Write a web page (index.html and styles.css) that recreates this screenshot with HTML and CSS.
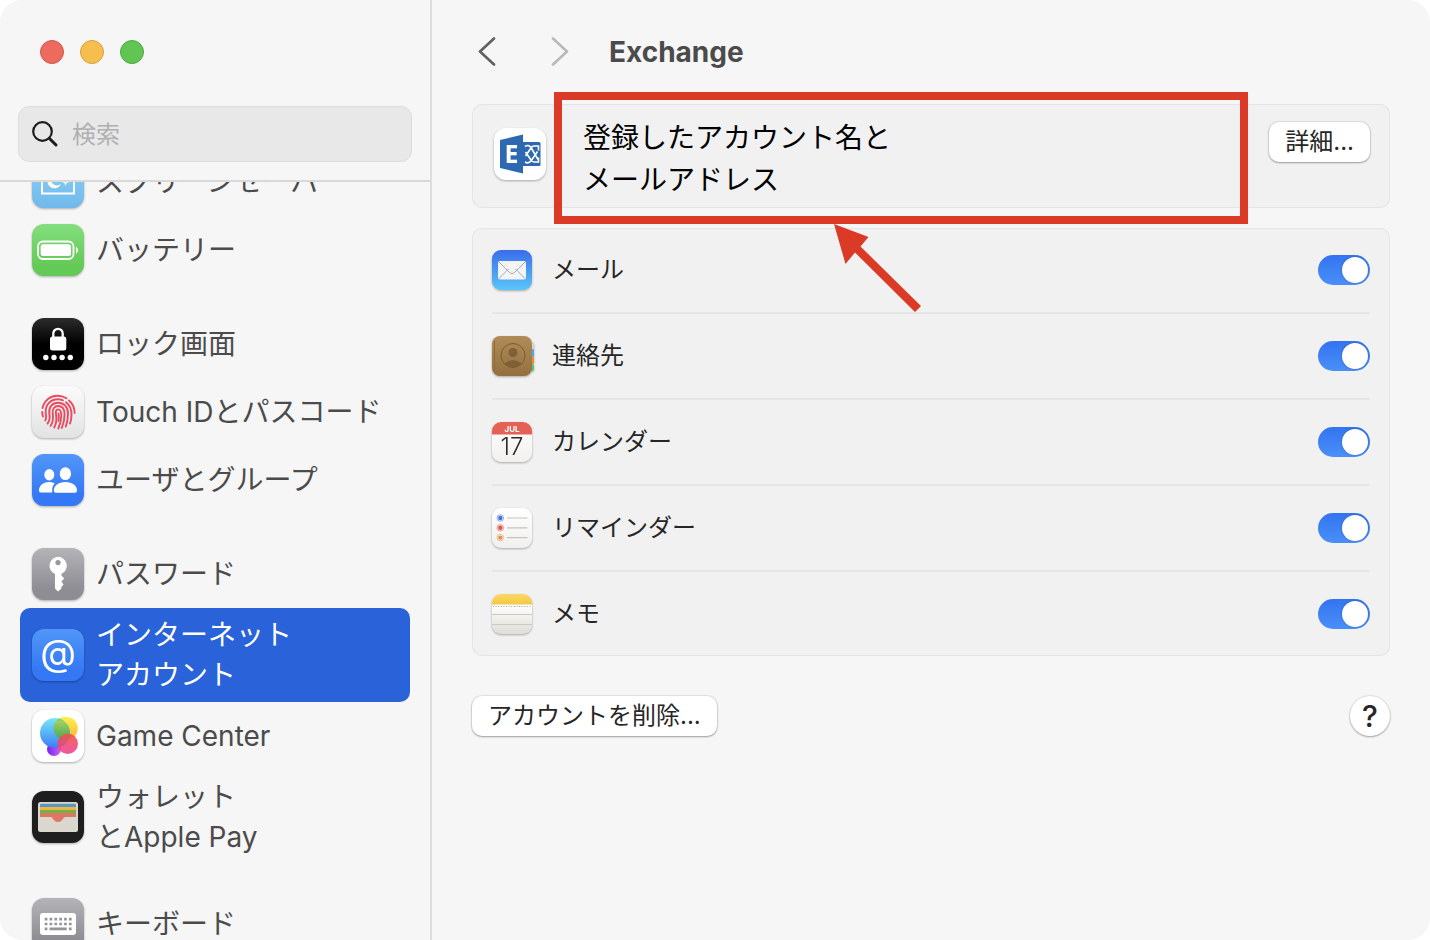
FILE: index.html
```html
<!DOCTYPE html>
<html lang="ja">
  <head>
    <meta charset="UTF-8" />
    <title>Exchange</title>
    <link rel="stylesheet" href="styles.css">
  </head>
  <body>
    <!-- shared gradients for the icons -->
    <svg class="defs" width="0" height="0" aria-hidden="true">
      <defs>
        <linearGradient id="gBlue" x1="0" y1="0" x2="0" y2="1"><stop offset="0" stop-color="#5196f8" /><stop offset="0.8" stop-color="#3478f6" /></linearGradient>
        <linearGradient id="gSky" x1="0" y1="0" x2="0" y2="1"><stop offset="0" stop-color="#8fd6f8" /><stop offset="1" stop-color="#6fb8ea" /></linearGradient>
        <linearGradient id="gGreen" x1="0" y1="0" x2="0" y2="1"><stop offset="0" stop-color="#83de7d" /><stop offset="0.8" stop-color="#64ca57" /></linearGradient>
        <linearGradient id="gBlack" x1="0" y1="0" x2="0" y2="1"><stop offset="0" stop-color="#2c2c2c" /><stop offset="0.5" stop-color="#000" /></linearGradient>
        <linearGradient id="gLight" x1="0" y1="0" x2="0" y2="1"><stop offset="0" stop-color="#fbfbfb" /><stop offset="1" stop-color="#e2e2e2" /></linearGradient>
        <linearGradient id="gGray" x1="0" y1="0" x2="0" y2="1"><stop offset="0" stop-color="#b4b3b8" /><stop offset="0.8" stop-color="#8e8d93" /></linearGradient>
        <linearGradient id="gMail" x1="0" y1="0" x2="0" y2="1"><stop offset="0" stop-color="#3a6de8" /><stop offset="1" stop-color="#5bc5fa" /></linearGradient>
        <linearGradient id="gPaper" x1="0" y1="0" x2="0" y2="1"><stop offset="0" stop-color="#fff" /><stop offset="1" stop-color="#f1f0ee" /></linearGradient>
        <linearGradient id="gNote" x1="0" y1="0" x2="0" y2="1"><stop offset="0.3" stop-color="#fdfdfc" /><stop offset="1" stop-color="#dfddd5" /></linearGradient>
        <linearGradient id="gYellow" x1="0" y1="0" x2="0" y2="1"><stop offset="0" stop-color="#f8d868" /><stop offset="1" stop-color="#f5c842" /></linearGradient>
        <linearGradient id="gBook" x1="0" y1="0" x2="0" y2="1"><stop offset="0" stop-color="#b08c58" /><stop offset="1" stop-color="#94703f" /></linearGradient>
        <linearGradient id="gBubble1" x1="0" y1="0" x2="0" y2="1"><stop offset="0" stop-color="#76e7f8" /><stop offset="1" stop-color="#3d7ef3" /></linearGradient>
        <linearGradient id="gBubble2" x1="0" y1="0" x2="0" y2="1"><stop offset="0" stop-color="#fdf14a" /><stop offset="1" stop-color="#f7b33c" /></linearGradient>
        <linearGradient id="gBubble3" x1="0" y1="0" x2="0" y2="1"><stop offset="0" stop-color="#52c4a0" /><stop offset="0.2" stop-color="#a3cf5e" /><stop offset="1" stop-color="#3fa75c" /></linearGradient>
        <linearGradient id="gBubble4" x1="0" y1="0" x2="0" y2="1"><stop offset="0" stop-color="#ef5145" /><stop offset="1" stop-color="#ee3f97" /></linearGradient>
        <linearGradient id="gBubble5" x1="0" y1="0" x2="1" y2="0"><stop offset="0" stop-color="#7a22f2" /><stop offset="1" stop-color="#c765ee" /></linearGradient>
        <clipPath id="cBubble"><circle cx="23" cy="23" r="15" /></clipPath>
        <clipPath id="cSmall"><rect width="40" height="40" rx="9" /></clipPath>
      </defs>
    </svg>

    <div class="window">
      <aside class="sidebar">
        <div class="sidebar-top">
          <div class="lights">
            <button class="light red" aria-label="閉じる"></button>
            <button class="light yellow" aria-label="しまう"></button>
            <button class="light green" aria-label="拡大"></button>
          </div>
          <label class="search">
            <svg width="28" height="28" viewBox="0 0 28 28" fill="none" stroke="#1d1d1d" stroke-linecap="round" aria-hidden="true">
              <circle cx="11.500" cy="11.500" r="9.300" stroke-width="2.200" />
              <path d="M18.500 18.500L25 25" stroke-width="3" />
            </svg>
            <input type="search" placeholder="検索" aria-label="検索" />
          </label>
        </div>

        <nav class="nav">
          <ul class="group">
            <li>
              <a class="item" href="#">
                <svg class="icon" viewBox="0 0 52 52" aria-hidden="true">
                  <rect width="52" height="52" rx="12" fill="url(#gSky)" />
                  <rect x="10" y="12" width="32" height="25.500" fill="none" stroke="#fff" stroke-width="2" />
                  <path d="M21 18.500a7 7 0 1 0 8 9.500a6.200 6.200 0 0 1-8-9.500z" fill="#fff" />
                  <path d="M33.500 22l1 3l3 1l-3 1l-1 3l-1-3l-3-1l3-1z" fill="#fff" />
                </svg>
                <span>スクリーンセーバ</span>
              </a>
            </li>
            <li>
              <a class="item" href="#">
                <svg class="icon" viewBox="0 0 52 52" aria-hidden="true">
                  <rect width="52" height="52" rx="12" fill="url(#gGreen)" />
                  <rect x="6" y="17.500" width="35.500" height="17.500" rx="5" fill="none" stroke="#fff" stroke-width="1.800" />
                  <rect x="8.700" y="20.300" width="30.300" height="11.800" rx="2.500" fill="#fff" />
                  <path d="M44 22.800a4 4 0 0 1 0 7z" fill="#fff" />
                </svg>
                <span>バッテリー</span>
              </a>
            </li>
          </ul>

          <ul class="group">
            <li>
              <a class="item" href="#">
                <svg class="icon" viewBox="0 0 52 52" aria-hidden="true">
                  <rect width="52" height="52" rx="12" fill="url(#gBlack)" />
                  <path d="M21.300 20v-4.500a4.700 4.700 0 0 1 9.400 0V20" fill="none" stroke="#fff" stroke-width="2.300" />
                  <rect x="18" y="18.500" width="16.300" height="14" rx="2.500" fill="#fff" />
                  <g fill="#fff">
                    <circle cx="13.800" cy="39.500" r="2.700" />
                    <circle cx="22" cy="39.500" r="2.700" />
                    <circle cx="30.100" cy="39.500" r="2.700" />
                    <circle cx="38.300" cy="39.500" r="2.700" />
                  </g>
                </svg>
                <span>ロック画面</span>
              </a>
            </li>
            <li>
              <a class="item" href="#">
                <svg class="icon" viewBox="0 0 52 52" aria-hidden="true">
                  <rect width="52" height="52" rx="12" fill="url(#gLight)" />
                  <g fill="none" stroke="#e94b60" stroke-width="1.900" stroke-linecap="round">
                    <path d="M10.500 22C12.500 13.500 19 9.800 25.500 9.800C28.800 9.800 32 10.800 34.500 12.300" />
                    <path d="M37 14.500C41 18 42.600 22 42.600 27" />
                    <path d="M10.200 26C10.300 28 10.400 29 11 30.500" />
                    <path d="M13.200 34.500C14.500 32.500 14.200 30 13.700 27C13 19 18.500 13.300 26 13.300C28 13.300 29.500 13.700 31 14.300" />
                    <path d="M34 16.300C38.500 19.800 39.600 24 39.500 29C39.400 32.500 39 35 38 37.500" />
                    <path d="M15.500 37.500C17.800 35 18 31.500 17.300 27.500C16.500 21 20.500 16.700 26 16.700C32 16.700 36 21 36 27.500C36 33 35.200 37 33.800 40.500" />
                    <path d="M18.500 40C21.500 36 21.400 32.500 20.700 27.500C20.200 22.800 22.500 20 26 20C30 20 32.500 23 32.600 28C32.600 33.500 31.500 38 29.800 42" />
                    <path d="M22.200 41.500C24.800 37 24.800 33 24 28C23.500 25 24.300 23.400 26 23.400C28.200 23.400 29.200 25.500 29.300 29C29.300 34 28.500 38 26.300 42.500" />
                    <path d="M26.600 27.500C27 31 26.800 33 26.500 35" />
                  </g>
                </svg>
                <span>Touch IDとパスコード</span>
              </a>
            </li>
            <li>
              <a class="item" href="#">
                <svg class="icon" viewBox="0 0 52 52" aria-hidden="true">
                  <rect width="52" height="52" rx="12" fill="url(#gBlue)" />
                  <g fill="#fff">
                    <ellipse cx="17.300" cy="20.700" rx="5" ry="5.700" />
                    <path d="M7 36.500C7 32 11 28 17 28C19.500 28 21.300 28.500 22.700 29.500C20.500 31.700 19.800 34.500 20.300 38.500H9C7.500 38.500 7 37.700 7 36.500z" />
                    <ellipse cx="33.400" cy="19.700" rx="5.700" ry="6.400" />
                    <path d="M21.800 36.500C21.800 32 26.500 28 33.400 28C40.500 28 45 32 45 36.500C45 37.700 44.500 38.700 43 38.700H23.800C22.300 38.700 21.800 37.700 21.800 36.500z" />
                  </g>
                </svg>
                <span>ユーザとグループ</span>
              </a>
            </li>
          </ul>

          <ul class="group">
            <li>
              <a class="item" href="#">
                <svg class="icon" viewBox="0 0 52 52" aria-hidden="true">
                  <rect width="52" height="52" rx="12" fill="url(#gGray)" />
                  <path d="M26 8.800a9 9 0 0 1 3.300 17.300v1.200l2.900 3.300l-2.700 3l2 2.900l-2.200 2.700v1.500L26 43.500l-3-3V26.100A9 9 0 0 1 26 8.800z" fill="#fff" />
                  <circle cx="26" cy="14.600" r="2.600" fill="#98979c" />
                </svg>
                <span>パスワード</span>
              </a>
            </li>
            <li>
              <a class="item selected" href="#" aria-current="page">
                <svg class="icon" viewBox="0 0 52 52" aria-hidden="true">
                  <rect width="52" height="52" rx="12" fill="url(#gBlue)" />
                  <text x="26" y="37" class="at-sign">@</text>
                </svg>
                <span>インターネット<br />アカウント</span>
              </a>
            </li>
            <li>
              <a class="item" href="#">
                <svg class="icon" viewBox="0 0 52 52" aria-hidden="true">
                  <rect width="52" height="52" rx="12" fill="#fff" />
                  <circle cx="22" cy="39" r="7" fill="url(#gBubble5)" />
                  <rect x="21.700" y="7" width="24" height="22.500" rx="11" fill="url(#gBubble2)" />
                  <circle cx="23" cy="23" r="15" fill="url(#gBubble1)" />
                  <rect x="21.700" y="7" width="24" height="22.500" rx="11" fill="url(#gBubble3)" clip-path="url(#cBubble)" />
                  <circle cx="35.700" cy="33.800" r="10.300" fill="url(#gBubble4)" opacity="0.880" />
                </svg>
                <span>Game Center</span>
              </a>
            </li>
            <li>
              <a class="item" href="#">
                <svg class="icon" viewBox="0 0 52 52" aria-hidden="true">
                  <rect width="52" height="52" rx="12" fill="#1e1e1e" />
                  <rect x="6" y="11" width="40" height="30" rx="2.500" fill="#dad7ce" />
                  <path d="M8 16v-2q0-1.300 1.300-1.300h33.400q1.300 0 1.300 1.300v2z" fill="#5597c6" />
                  <path d="M8 16h36v3H8z" fill="#f2b43f" />
                  <path d="M8 19h36v3H8z" fill="#6bb445" />
                  <path d="M8 22h36v4H33.500C31 26 30.500 31 26 31C21.500 31 21 26 18.500 26H8z" fill="#e27463" />
                </svg>
                <span>ウォレット<br />とApple Pay</span>
              </a>
            </li>
          </ul>

          <ul class="group">
            <li>
              <a class="item" href="#">
                <svg class="icon" viewBox="0 0 52 52" aria-hidden="true">
                  <rect width="52" height="52" rx="12" fill="url(#gGray)" />
                  <rect x="8" y="15" width="36" height="22" rx="3" fill="#fff" />
                  <g stroke="#95949a" stroke-width="2.700">
                    <path d="M12.700 21.200h27.500" stroke-dasharray="2.700 2.150" />
                    <path d="M12.700 26h27.500" stroke-dasharray="2.700 2.150" />
                    <path d="M12.700 30.800h2.700M17.500 30.800h17.200M36.900 30.800h2.700" />
                  </g>
                </svg>
                <span>キーボード</span>
              </a>
            </li>
          </ul>
        </nav>
      </aside>

      <main class="content">
        <header class="toolbar">
          <button class="arrow-button" aria-label="戻る">
            <svg width="18" height="30" viewBox="0 0 18 30" aria-hidden="true"><path d="M16 1.500L2 14.500L16 27.500" /></svg>
          </button>
          <button class="arrow-button" aria-label="進む" disabled>
            <svg width="18" height="30" viewBox="0 0 18 30" aria-hidden="true"><path d="M2 1.500L16 14.500L2 27.500" /></svg>
          </button>
          <h1>Exchange</h1>
        </header>

        <section class="card account">
          <svg class="icon" viewBox="0 0 52 52" aria-hidden="true">
            <rect width="52" height="52" rx="12" fill="#fff" />
            <path d="M29 14h16q1.500 0 1.500 1.500v21q0 1.500-1.500 1.500H29z" fill="#2c69b0" />
            <g fill="none" stroke="#fff" stroke-width="1.600">
              <path d="M31 18.500q3.500-2.500 6 1l7 12" />
              <path d="M44.500 22.500v-4.500h-4.500q-2 0-3 2l-5.500 8" />
              <path d="M31 34q3.500 2 6-1l6.500-9.500" />
              <path d="M44.500 29.500v4.500h-4.500q-2 0-3-2l-5.500-8" />
            </g>
            <path d="M6 12L29 6.500v39L6 40z" fill="#2c69b0" />
            <text x="17.500" y="35" class="letter-e">E</text>
          </svg>
          <p class="account-name">登録したアカウント名と<br />メールアドレス</p>
          <button class="button">詳細...</button>
          <div class="highlight"></div>
          <svg class="pointer" width="90" height="90" viewBox="0 0 90 90" aria-hidden="true">
            <path d="M1 1L35.500 14L27.500 23.500L88 83L82 89L22 29.500L12.500 41z" />
          </svg>
        </section>

        <ul class="card services">
          <li class="service">
            <svg class="icon-small" viewBox="0 0 40 40" aria-hidden="true">
              <rect width="40" height="40" rx="9" fill="url(#gMail)" />
              <rect x="6" y="11" width="28" height="18.500" rx="2" fill="#f4f4f5" />
              <path d="M7 28.500L16.500 19M33 28.500L23.500 19M7 12L17.500 22.500Q20 25 22.500 22.500L33 12" fill="none" stroke="#a5abb5" stroke-width="1" />
            </svg>
            <label for="mail">メール</label>
            <input class="switch" type="checkbox" role="switch" id="mail" checked />
          </li>
          <li class="service">
            <svg class="icon-small" viewBox="0 0 40 40" aria-hidden="true">
              <rect x="36" y="6" width="6" height="8" rx="2" fill="#d4d4d0" />
              <rect x="36" y="13" width="6" height="8" rx="1" fill="#4fa9e8" />
              <rect x="36" y="21" width="6" height="7" rx="1" fill="#ee8b3a" />
              <rect x="36" y="28" width="6" height="7" rx="2" fill="#5cc468" />
              <rect width="40" height="40" rx="8" fill="url(#gBook)" />
              <path d="M2.500 5v30" stroke="#8d6b3e" stroke-width="1" />
              <circle cx="21" cy="19.500" r="12" fill="none" stroke="#7a5b32" stroke-width="1" />
              <circle cx="21" cy="16.500" r="4.500" fill="#7f6038" />
              <path d="M12.500 27.500q8.500-7 17 0q-8.500 7.500-17 0z" fill="#7f6038" />
            </svg>
            <label for="contacts">連絡先</label>
            <input class="switch" type="checkbox" role="switch" id="contacts" checked />
          </li>
          <li class="service">
            <svg class="icon-small" viewBox="0 0 40 40" aria-hidden="true">
              <rect width="40" height="40" rx="9" fill="url(#gPaper)" />
              <path d="M0 0h40v12.500H0z" fill="#e66155" clip-path="url(#cSmall)" />
              <text x="20" y="9.500" class="cal-month">JUL</text>
              <text x="20" y="33" class="cal-day">17</text>
            </svg>
            <label for="calendar">カレンダー</label>
            <input class="switch" type="checkbox" role="switch" id="calendar" checked />
          </li>
          <li class="service">
            <svg class="icon-small" viewBox="0 0 40 40" aria-hidden="true">
              <rect width="40" height="40" rx="9" fill="url(#gPaper)" />
              <g stroke-width="1" fill-opacity="0.900" stroke-opacity="0.500">
                <circle cx="8.300" cy="10" r="2.200" fill="#2f62dd" /><circle cx="8.300" cy="10" r="3.300" fill="none" stroke="#2f62dd" />
                <circle cx="8.300" cy="19.800" r="2.200" fill="#dc4238" /><circle cx="8.300" cy="19.800" r="3.300" fill="none" stroke="#dc4238" />
                <circle cx="8.300" cy="29.600" r="2.200" fill="#e08a3c" /><circle cx="8.300" cy="29.600" r="3.300" fill="none" stroke="#e08a3c" />
              </g>
              <path d="M15 10h20.500M15 19.800h20.500M15 29.600h20.500" stroke="#c3c2c6" stroke-width="1.200" />
            </svg>
            <label for="reminders">リマインダー</label>
            <input class="switch" type="checkbox" role="switch" id="reminders" checked />
          </li>
          <li class="service">
            <svg class="icon-small" viewBox="0 0 40 40" aria-hidden="true">
              <rect width="40" height="40" rx="9" fill="url(#gNote)" />
              <path d="M0 0h40v10.500H0z" fill="url(#gYellow)" clip-path="url(#cSmall)" />
              <path d="M1 12.500h38" stroke="#a8a59c" stroke-width="1" stroke-dasharray="1 1.600" />
              <path d="M0 20.500h40M0 30.500h40" stroke="#cbc9c4" stroke-width="1" />
            </svg>
            <label for="notes">メモ</label>
            <input class="switch" type="checkbox" role="switch" id="notes" checked />
          </li>
        </ul>

        <footer class="actions">
          <button class="button">アカウントを削除...</button>
          <button class="button help" aria-label="ヘルプ">?</button>
        </footer>
      </main>
    </div>
  </body>
</html>
```
FILE: styles.css
```css
* {
  box-sizing: border-box;
}

body {
  margin: 0;
  background: #fff;
  font-family: Inter, "Noto Sans CJK JP", sans-serif;
  color: #262626;
}

ul,
p,
h1 {
  margin: 0;
  padding: 0;
  list-style: none;
}

button,
input {
  font: inherit;
  color: inherit;
}

.defs {
  position: absolute;
}

.window {
  display: flex;
  height: 100vh;
  overflow: hidden;
  border-radius: 22px;
  background: #f6f6f6;
}

/* sidebar */

.sidebar {
  display: flex;
  flex-direction: column;
  flex: 0 0 432px;
  min-width: 0;
  border-right: 2px solid #dedede;
}

.sidebar-top {
  flex: none;
  padding: 40px 18px 18px;
  border-bottom: 2px solid #d9d9d9;
}

.lights {
  display: flex;
  gap: 16px;
  padding: 0 22px;
  margin-bottom: 42px;
}

.light {
  width: 24px;
  height: 24px;
  padding: 0;
  border: 1px solid;
  border-radius: 50%;
}

.red {
  background: #ec6a5e;
  border-color: #d4544a;
}

.yellow {
  background: #f4bf4f;
  border-color: #d9a13c;
}

.green {
  background: #61c554;
  border-color: #4fa73e;
}

.search {
  display: flex;
  align-items: center;
  gap: 13px;
  height: 56px;
  padding: 0 12px;
  background: #e8e8e8;
  border: 1px solid #dcdcdc;
  border-radius: 11px;
}

.search input {
  flex: 1;
  width: 100%;
  min-width: 0;
  padding: 0;
  border: 0;
  outline: 0;
  background: none;
  font-size: 24px;
}

.search input::placeholder {
  color: #b0b0b0;
}

.nav {
  flex: 1;
  overflow: hidden;
  padding: 0 20px;
}

.group {
  margin-bottom: 26px;
}

/* the list is scrolled a little */
.group:first-child {
  margin-top: -34px;
}

.item {
  display: flex;
  align-items: center;
  gap: 12px;
  min-height: 68px;
  padding: 7px 12px;
  border-radius: 10px;
  color: #4b4b4b;
  font-size: 28px;
  line-height: 40px;
  text-decoration: none;
  white-space: nowrap;
}

.selected {
  background: #2962d9;
  color: #fff;
}

.icon {
  flex: none;
  width: 52px;
  height: 52px;
  filter: drop-shadow(0 1px 1px rgba(0, 0, 0, 0.3));
}

.at-sign {
  fill: #fff;
  font-size: 37px;
  text-anchor: middle;
}

/* right side */

.content {
  flex: 1;
  min-width: 0;
  padding: 0 40px;
}

.toolbar {
  display: flex;
  align-items: center;
  height: 104px;
  padding: 0 6px;
}

.arrow-button {
  display: flex;
  width: 18px;
  margin-right: 55px;
  padding: 0;
  border: 0;
  background: none;
}

.arrow-button:disabled {
  margin-right: 40px;
}

.arrow-button path {
  fill: none;
  stroke: #606060;
  stroke-width: 2.6;
  stroke-linecap: round;
  stroke-linejoin: round;
}

.arrow-button:disabled path {
  stroke: #b9b9b9;
}

h1 {
  color: #4b4b4b;
  font-size: 28px;
  font-weight: 700;
}

.card {
  background: #f1f1f1;
  border-radius: 10px;
  box-shadow: inset 0 0 0 1px #e4e4e4;
}

.account {
  position: relative;
  display: flex;
  align-items: flex-start;
  height: 104px;
  margin-bottom: 20px;
  padding: 13px 20px 13px 22px;
}

.account .icon {
  margin: 11px 37px 0 0;
}

.account-name {
  flex: 1;
  color: #000;
  font-size: 28px;
  line-height: 42px;
}

.account .button {
  margin-top: 5px;
}

.letter-e {
  fill: #fff;
  font-family: "Open Sans", sans-serif;
  font-size: 25px;
  font-weight: 700;
  text-anchor: middle;
}

.highlight {
  position: absolute;
  top: -12px;
  right: 142px;
  bottom: -16px;
  left: 82px;
  border: 8px solid #db3a26;
}

.pointer {
  position: absolute;
  top: 119px;
  left: 361px;
  fill: #db3a26;
}

.services {
  padding: 0 20px;
}

.service {
  display: flex;
  align-items: center;
  gap: 20px;
  height: 86px;
  border-top: 2px solid #e6e6e6;
  font-size: 24px;
}

.service:first-child {
  height: 84px;
  border-top: 0;
}

.service label {
  flex: 1;
  line-height: 36px;
}

.icon-small {
  flex: none;
  width: 40px;
  height: 40px;
  overflow: visible;
  filter: drop-shadow(0 1px 1px rgba(0, 0, 0, 0.3));
}

.cal-month {
  fill: #fff;
  font-size: 8px;
  font-weight: 700;
  text-anchor: middle;
}

.cal-day {
  fill: #2b2b2b;
  font-size: 24px;
  font-weight: 300;
  text-anchor: middle;
}

.switch {
  display: flex;
  justify-content: flex-end;
  appearance: none;
  width: 52px;
  height: 30px;
  margin: 0;
  padding: 2px;
  border-radius: 15px;
  background: linear-gradient(#3374f0, #4a8ff8);
}

.switch::before {
  content: "";
  width: 26px;
  height: 26px;
  border-radius: 50%;
  background: #fff;
  box-shadow: 0 0 2px rgba(0, 0, 0, 0.3);
}

.switch:not(:checked) {
  justify-content: flex-start;
  background: #d0d0d0;
}

.button {
  height: 40px;
  padding: 0 16px;
  border: 0;
  border-radius: 10px;
  background: #fff;
  box-shadow: 0 0 1px 1px rgba(0, 0, 0, 0.08), 0 1px 2px rgba(0, 0, 0, 0.3);
  font-size: 24px;
  line-height: 38px;
  white-space: nowrap;
}

.actions {
  display: flex;
  justify-content: space-between;
  padding-top: 40px;
}

.help {
  width: 40px;
  padding: 0;
  border-radius: 50%;
  font-size: 30px;
  font-weight: 500;
}
```
